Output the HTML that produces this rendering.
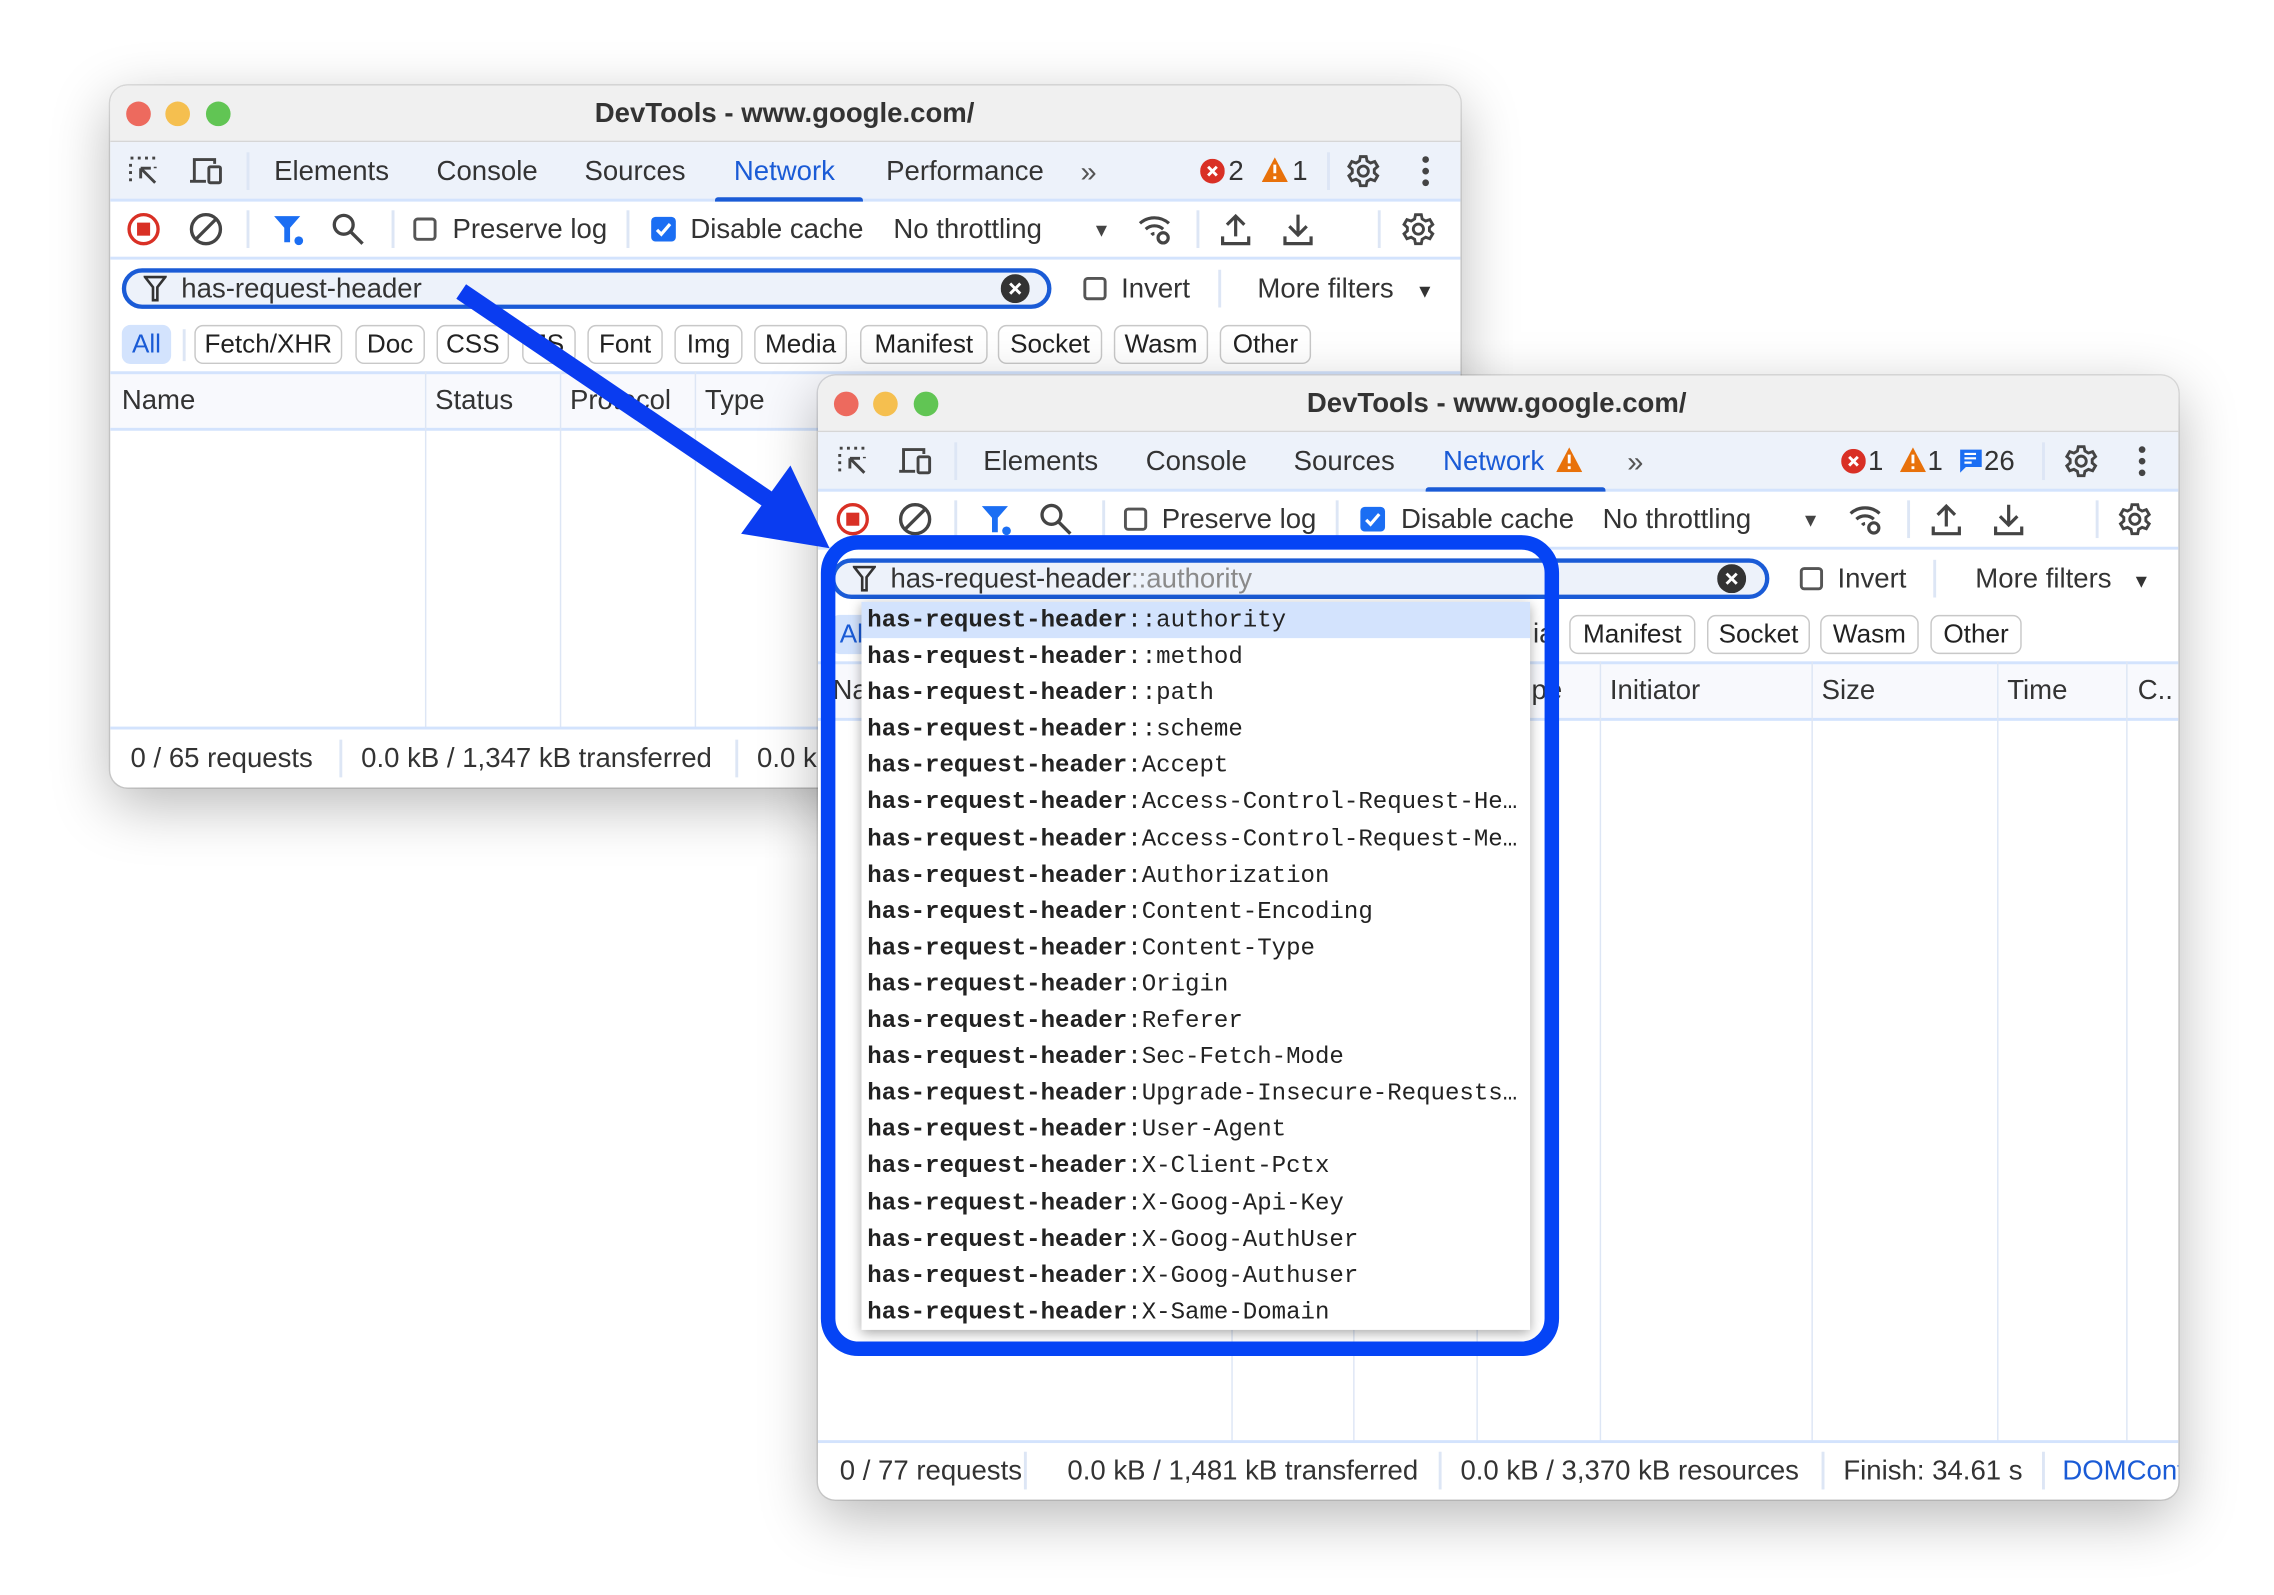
<!DOCTYPE html>
<html><head><meta charset="utf-8"><style>
*{box-sizing:border-box;margin:0;padding:0}
html,body{width:2274px;height:1595px;overflow:hidden;background:#fff}
#s{position:absolute;left:0;top:0;width:1568px;height:1100px;transform:scale(1.4503);transform-origin:0 0;font-family:"Liberation Sans",sans-serif;color:#333}
.w{position:absolute;background:#fff;border-radius:12px;overflow:hidden;box-shadow:0 12px 40px rgba(0,0,0,.28),0 0 0 1px rgba(0,0,0,.12)}
.a{position:absolute}
.c{position:absolute;transform:translateY(-50%);white-space:nowrap;font-size:19px;line-height:22px;margin-top:1px}
.tb{position:absolute;left:0;right:0;top:0;height:39px;background:#f0f0f0;border-bottom:1px solid #d6d6d6}
.tt{position:absolute;top:20px;transform:translate(-50%,-50%);font-size:19px;font-weight:bold;color:#333;white-space:nowrap}
.l{position:absolute;top:11px;width:17px;height:17px;border-radius:50%}
.tabs{position:absolute;left:0;right:0;top:39px;height:41px;background:#edf2fa;border-bottom:2px solid #d3e3fd}
.sep{position:absolute;width:2px;height:26px;background:#dde6f5;transform:translateY(-50%)}
.row{position:absolute;left:0;right:0;border-bottom:2px solid #d3e3fd}
.cb{position:absolute;width:16px;height:16px;border:2px solid #555;border-radius:3px;transform:translateY(-50%)}
.cbk{position:absolute;width:17px;height:17px;background:#1b6ef3;border-radius:3px;transform:translateY(-50%)}
.inp{position:absolute;height:28px;border:3px solid #1a5bd6;border-radius:14px;background:#edf2fa}
.chip{position:absolute;height:27px;border:1.5px solid #c8c8c8;border-radius:6px;font-size:18px;line-height:25px;text-align:center;color:#222}
.vl{position:absolute;width:1px;background:#dde6f5}
.ic{position:absolute;transform:translate(-50%,-50%)}
.dd{position:absolute;left:594px;top:415px;width:461px;height:502px;background:#fff;box-shadow:0 2px 8px rgba(0,0,0,.35)}
.dd div{height:25.1px;line-height:26px;padding-left:4px;font-family:"Liberation Mono",monospace;font-size:16.6px;color:#222;white-space:nowrap;overflow:hidden}
.dd b{font-weight:bold}
</style></head><body><div id="s">

<!-- WINDOW 1 -->
<div class="w" style="left:76px;top:59px;width:931px;height:484px">
 <div class="tb"></div>
 <div class="l" style="left:11px;background:#ed6a5e"></div><div class="l" style="left:38px;background:#f5bf4f"></div><div class="l" style="left:66px;background:#61c554"></div>
 <div class="tt" style="left:465px">DevTools - www.google.com/</div>
 <div class="tabs"></div>
 <svg class="ic" style="left:23px;top:59px" width="24" height="24" viewBox="0 0 24 24" fill="none" stroke="#444" stroke-width="2"><path d="M3 3h2M8 3h2M13 3h2M18 3h2v2M3 7v2M3 12v2M3 17v2h2M20 9v1" stroke-dasharray="2 2"/><path d="M10 10l10 10M10 10v7M10 10h7"/></svg>
 <svg class="ic" style="left:66px;top:59px" width="26" height="24" viewBox="0 0 26 24" fill="none" stroke="#444" stroke-width="2"><path d="M5 19V4h14v3M2 19h11"/><rect x="15" y="9" width="8" height="11" rx="1"/></svg>
 <div class="sep" style="left:94px;top:59px"></div>
 <div class="c" style="left:113px;top:59px">Elements</div>
 <div class="c" style="left:225px;top:59px">Console</div>
 <div class="c" style="left:327px;top:59px">Sources</div>
 <div class="c" style="left:430px;top:59px;color:#1a5bd6">Network</div>
 <div class="a" style="left:417px;top:77px;width:102px;height:3px;background:#1a5bd6;border-radius:2px 2px 0 0"></div>
 <div class="c" style="left:535px;top:59px">Performance</div>
 <div class="c" style="left:669px;top:59px;font-size:20px;color:#555">»</div>
 <svg class="ic" style="left:760px;top:59px" width="17" height="17" viewBox="0 0 17 17"><circle cx="8.5" cy="8.5" r="8.5" fill="#d93025"/><path d="M5.5 5.5l6 6M11.5 5.5l-6 6" stroke="#fff" stroke-width="2"/></svg>
 <div class="c" style="left:771px;top:59px">2</div>
 <svg class="ic" style="left:803px;top:58px" width="18" height="17" viewBox="0 0 18 17"><path d="M9 0L18 17H0z" fill="#e8710a"/><path d="M9 5v6M9 13v2" stroke="#fff" stroke-width="2"/></svg>
 <div class="c" style="left:815px;top:59px">1</div>
 <div class="sep" style="left:839px;top:59px"></div>
 <svg class="ic" style="left:864px;top:59px" width="24" height="24" viewBox="0 0 24 24" fill="none" stroke="#444" stroke-width="2"><circle cx="12" cy="12" r="3.5"/><path d="M10 2h4l.6 3 2.4 1.4 2.9-1 2 3.4-2.3 2v2.4l2.3 2-2 3.4-2.9-1L14.6 19 14 22h-4l-.6-3L7 17.6l-2.9 1-2-3.4 2.3-2v-2.4l-2.3-2 2-3.4 2.9 1L9.4 5z"/></svg>
 <svg class="ic" style="left:907px;top:59px" width="6" height="22" viewBox="0 0 6 22" fill="#444"><circle cx="3" cy="3" r="2.3"/><circle cx="3" cy="11" r="2.3"/><circle cx="3" cy="19" r="2.3"/></svg>
 <div class="row" style="top:80px;height:40px"></div>
 <svg class="ic" style="left:23px;top:99px" width="24" height="24" viewBox="0 0 24 24"><circle cx="12" cy="12" r="10" fill="none" stroke="#d93025" stroke-width="2.3"/><rect x="7.5" y="7.5" width="9" height="9" fill="#d93025"/></svg>
 <svg class="ic" style="left:66px;top:99px" width="24" height="24" viewBox="0 0 24 24" fill="none" stroke="#444" stroke-width="2.3"><circle cx="12" cy="12" r="10"/><path d="M5 19L19 5"/></svg>
 <div class="sep" style="left:94px;top:99px"></div>
 <svg class="ic" style="left:123px;top:99px" width="24" height="24" viewBox="0 0 24 24"><path d="M2 3h18l-7 8v10h-4V11z" fill="#1b6ef3"/><circle cx="19" cy="20" r="3" fill="#1b6ef3"/></svg>
 <svg class="ic" style="left:164px;top:99px" width="24" height="24" viewBox="0 0 24 24" fill="none" stroke="#444" stroke-width="2.3"><circle cx="9" cy="9" r="6.5"/><path d="M14 14l8 8"/></svg>
 <div class="sep" style="left:194px;top:99px"></div>
 <div class="cb" style="left:209px;top:99px"></div>
 <div class="c" style="left:236px;top:99px">Preserve log</div>
 <div class="sep" style="left:356px;top:99px"></div>
 <div class="cbk" style="left:373px;top:99px"><svg width="17" height="17" viewBox="0 0 17 17"><path d="M4 9l3 3 6-7" fill="none" stroke="#fff" stroke-width="2.2"/></svg></div>
 <div class="c" style="left:400px;top:99px">Disable cache</div>
 <div class="c" style="left:540px;top:99px">No throttling</div>
 <div class="c" style="left:677px;top:99px;font-size:13px;color:#444">▼</div>
 <svg class="ic" style="left:721px;top:99px" width="26" height="24" viewBox="0 0 26 24" fill="none" stroke="#444" stroke-width="2.2"><path d="M2 8a15 15 0 0 1 20 0M6 12a9 9 0 0 1 12 0M10 16a3 3 0 0 1 2-1"/><circle cx="18" cy="18" r="3.5"/></svg>
 <div class="sep" style="left:749px;top:99px"></div>
 <svg class="ic" style="left:776px;top:99px" width="22" height="24" viewBox="0 0 22 24" fill="none" stroke="#444" stroke-width="2.2"><path d="M11 17V3M5 9l6-6 6 6M2 17v5h18v-5"/></svg>
 <svg class="ic" style="left:819px;top:99px" width="22" height="24" viewBox="0 0 22 24" fill="none" stroke="#444" stroke-width="2.2"><path d="M11 2v14M5 10l6 6 6-6M2 17v5h18v-5"/></svg>
 <div class="sep" style="left:874px;top:99px"></div>
 <svg class="ic" style="left:902px;top:99px" width="24" height="24" viewBox="0 0 24 24" fill="none" stroke="#444" stroke-width="2"><circle cx="12" cy="12" r="3.5"/><path d="M10 2h4l.6 3 2.4 1.4 2.9-1 2 3.4-2.3 2v2.4l2.3 2-2 3.4-2.9-1L14.6 19 14 22h-4l-.6-3L7 17.6l-2.9 1-2-3.4 2.3-2v-2.4l-2.3-2 2-3.4 2.9 1L9.4 5z"/></svg>
 <div class="inp" style="left:8px;top:126px;width:641px"></div>
 <svg class="ic" style="left:31px;top:140px" width="16" height="18" viewBox="0 0 16 18" fill="none" stroke="#333" stroke-width="1.8"><path d="M1 1h14l-5.5 7v9h-3V8z"/></svg>
 <div class="c" style="left:49px;top:140px">has-request-header</div>
 <svg class="ic" style="left:624px;top:140px" width="20" height="20" viewBox="0 0 20 20"><circle cx="10" cy="10" r="10" fill="#333"/><path d="M6.5 6.5l7 7M13.5 6.5l-7 7" stroke="#fff" stroke-width="2"/></svg>
 <div class="cb" style="left:671px;top:140px"></div>
 <div class="c" style="left:697px;top:140px">Invert</div>
 <div class="sep" style="left:764px;top:140px"></div>
 <div class="c" style="left:791px;top:140px">More filters</div>
 <div class="c" style="left:900px;top:141px;font-size:13px">▼</div>
 <div class="chip" style="left:8px;top:165px;width:34px;background:#d3e3fd;border-color:#d3e3fd;color:#1a5bd6">All</div>
 <div class="a" style="left:50px;top:168px;width:2px;height:22px;background:#dde6f5"></div>
 <div class="chip" style="left:58px;top:165px;width:102px">Fetch/XHR</div>
 <div class="chip" style="left:169px;top:165px;width:48px">Doc</div>
 <div class="chip" style="left:225px;top:165px;width:50px">CSS</div>
 <div class="chip" style="left:284px;top:165px;width:37px">JS</div>
 <div class="chip" style="left:329px;top:165px;width:52px">Font</div>
 <div class="chip" style="left:389px;top:165px;width:47px">Img</div>
 <div class="chip" style="left:444px;top:165px;width:64px">Media</div>
 <div class="chip" style="left:517px;top:165px;width:88px">Manifest</div>
 <div class="chip" style="left:612px;top:165px;width:72px">Socket</div>
 <div class="chip" style="left:692px;top:165px;width:65px">Wasm</div>
 <div class="chip" style="left:765px;top:165px;width:63px">Other</div>
 <div class="row" style="top:197px;height:41px;background:#f8f9fd;border-top:2px solid #d3e3fd"></div>
 <div class="vl" style="left:217px;top:197px;height:247px"></div>
 <div class="vl" style="left:310px;top:197px;height:247px"></div>
 <div class="vl" style="left:403px;top:197px;height:247px"></div>
 <div class="c" style="left:8px;top:217px">Name</div>
 <div class="c" style="left:224px;top:217px">Status</div>
 <div class="c" style="left:317px;top:217px">Protocol</div>
 <div class="c" style="left:410px;top:217px">Type</div>
 <div class="a" style="left:0;right:0;top:442px;height:2px;background:#d3e3fd"></div>
 <div class="c" style="left:14px;top:464px">0 / 65 requests</div>
 <div class="sep" style="left:158px;top:464px"></div>
 <div class="c" style="left:173px;top:464px">0.0 kB / 1,347 kB transferred</div>
 <div class="sep" style="left:431px;top:464px"></div>
 <div class="c" style="left:446px;top:464px">0.0 kB / 3,370 kB resources</div>
</div>

<!-- WINDOW 2 -->
<div class="w" style="left:564px;top:259px;width:938px;height:775px">
 <div class="tb"></div>
 <div class="l" style="left:11px;background:#ed6a5e"></div><div class="l" style="left:38px;background:#f5bf4f"></div><div class="l" style="left:66px;background:#61c554"></div>
 <div class="tt" style="left:468px">DevTools - www.google.com/</div>
 <div class="tabs"></div>
 <svg class="ic" style="left:24px;top:59px" width="24" height="24" viewBox="0 0 24 24" fill="none" stroke="#444" stroke-width="2"><path d="M3 3h2M8 3h2M13 3h2M18 3h2v2M3 7v2M3 12v2M3 17v2h2M20 9v1" stroke-dasharray="2 2"/><path d="M10 10l10 10M10 10v7M10 10h7"/></svg>
 <svg class="ic" style="left:67px;top:59px" width="26" height="24" viewBox="0 0 26 24" fill="none" stroke="#444" stroke-width="2"><path d="M5 19V4h14v3M2 19h11"/><rect x="15" y="9" width="8" height="11" rx="1"/></svg>
 <div class="sep" style="left:94px;top:59px"></div>
 <div class="c" style="left:114px;top:59px">Elements</div>
 <div class="c" style="left:226px;top:59px">Console</div>
 <div class="c" style="left:328px;top:59px">Sources</div>
 <div class="c" style="left:431px;top:59px;color:#1a5bd6">Network</div>
 <svg class="ic" style="left:518px;top:58px" width="18" height="17" viewBox="0 0 18 17"><path d="M9 0L18 17H0z" fill="#e8710a"/><path d="M9 5v6M9 13v2" stroke="#fff" stroke-width="2"/></svg>
 <div class="a" style="left:419px;top:77px;width:124px;height:3px;background:#1a5bd6;border-radius:2px 2px 0 0"></div>
 <div class="c" style="left:558px;top:59px;font-size:20px;color:#555">»</div>
 <svg class="ic" style="left:714px;top:59px" width="17" height="17" viewBox="0 0 17 17"><circle cx="8.5" cy="8.5" r="8.5" fill="#d93025"/><path d="M5.5 5.5l6 6M11.5 5.5l-6 6" stroke="#fff" stroke-width="2"/></svg>
 <div class="c" style="left:724px;top:59px">1</div>
 <svg class="ic" style="left:755px;top:58px" width="18" height="17" viewBox="0 0 18 17"><path d="M9 0L18 17H0z" fill="#e8710a"/><path d="M9 5v6M9 13v2" stroke="#fff" stroke-width="2"/></svg>
 <div class="c" style="left:765px;top:59px">1</div>
 <svg class="ic" style="left:795px;top:59px" width="15" height="18" viewBox="0 0 15 18"><path d="M0 1h15v12H4l-4 4z" fill="#1b6ef3"/><path d="M3 4h8M3 7h8M3 10h5" stroke="#fff" stroke-width="1.5"/></svg>
 <div class="c" style="left:804px;top:59px">26</div>
 <div class="sep" style="left:844px;top:59px"></div>
 <svg class="ic" style="left:871px;top:59px" width="24" height="24" viewBox="0 0 24 24" fill="none" stroke="#444" stroke-width="2"><circle cx="12" cy="12" r="3.5"/><path d="M10 2h4l.6 3 2.4 1.4 2.9-1 2 3.4-2.3 2v2.4l2.3 2-2 3.4-2.9-1L14.6 19 14 22h-4l-.6-3L7 17.6l-2.9 1-2-3.4 2.3-2v-2.4l-2.3-2 2-3.4 2.9 1L9.4 5z"/></svg>
 <svg class="ic" style="left:913px;top:59px" width="6" height="22" viewBox="0 0 6 22" fill="#444"><circle cx="3" cy="3" r="2.3"/><circle cx="3" cy="11" r="2.3"/><circle cx="3" cy="19" r="2.3"/></svg>
 <div class="row" style="top:80px;height:40px"></div>
 <svg class="ic" style="left:24px;top:99px" width="24" height="24" viewBox="0 0 24 24"><circle cx="12" cy="12" r="10" fill="none" stroke="#d93025" stroke-width="2.3"/><rect x="7.5" y="7.5" width="9" height="9" fill="#d93025"/></svg>
 <svg class="ic" style="left:67px;top:99px" width="24" height="24" viewBox="0 0 24 24" fill="none" stroke="#444" stroke-width="2.3"><circle cx="12" cy="12" r="10"/><path d="M5 19L19 5"/></svg>
 <div class="sep" style="left:94px;top:99px"></div>
 <svg class="ic" style="left:123px;top:99px" width="24" height="24" viewBox="0 0 24 24"><path d="M2 3h18l-7 8v10h-4V11z" fill="#1b6ef3"/><circle cx="19" cy="20" r="3" fill="#1b6ef3"/></svg>
 <svg class="ic" style="left:164px;top:99px" width="24" height="24" viewBox="0 0 24 24" fill="none" stroke="#444" stroke-width="2.3"><circle cx="9" cy="9" r="6.5"/><path d="M14 14l8 8"/></svg>
 <div class="sep" style="left:196px;top:99px"></div>
 <div class="cb" style="left:211px;top:99px"></div>
 <div class="c" style="left:237px;top:99px">Preserve log</div>
 <div class="sep" style="left:357px;top:99px"></div>
 <div class="cbk" style="left:374px;top:99px"><svg width="17" height="17" viewBox="0 0 17 17"><path d="M4 9l3 3 6-7" fill="none" stroke="#fff" stroke-width="2.2"/></svg></div>
 <div class="c" style="left:402px;top:99px">Disable cache</div>
 <div class="c" style="left:541px;top:99px">No throttling</div>
 <div class="c" style="left:678px;top:99px;font-size:13px;color:#444">▼</div>
 <svg class="ic" style="left:723px;top:99px" width="26" height="24" viewBox="0 0 26 24" fill="none" stroke="#444" stroke-width="2.2"><path d="M2 8a15 15 0 0 1 20 0M6 12a9 9 0 0 1 12 0M10 16a3 3 0 0 1 2-1"/><circle cx="18" cy="18" r="3.5"/></svg>
 <div class="sep" style="left:751px;top:99px"></div>
 <svg class="ic" style="left:778px;top:99px" width="22" height="24" viewBox="0 0 22 24" fill="none" stroke="#444" stroke-width="2.2"><path d="M11 17V3M5 9l6-6 6 6M2 17v5h18v-5"/></svg>
 <svg class="ic" style="left:821px;top:99px" width="22" height="24" viewBox="0 0 22 24" fill="none" stroke="#444" stroke-width="2.2"><path d="M11 2v14M5 10l6 6 6-6M2 17v5h18v-5"/></svg>
 <div class="sep" style="left:881px;top:99px"></div>
 <svg class="ic" style="left:908px;top:99px" width="24" height="24" viewBox="0 0 24 24" fill="none" stroke="#444" stroke-width="2"><circle cx="12" cy="12" r="3.5"/><path d="M10 2h4l.6 3 2.4 1.4 2.9-1 2 3.4-2.3 2v2.4l2.3 2-2 3.4-2.9-1L14.6 19 14 22h-4l-.6-3L7 17.6l-2.9 1-2-3.4 2.3-2v-2.4l-2.3-2 2-3.4 2.9 1L9.4 5z"/></svg>
 <div class="inp" style="left:9px;top:126px;width:647px"></div>
 <svg class="ic" style="left:32px;top:140px" width="16" height="18" viewBox="0 0 16 18" fill="none" stroke="#333" stroke-width="1.8"><path d="M1 1h14l-5.5 7v9h-3V8z"/></svg>
 <div class="c" style="left:50px;top:140px">has-request-header<span style="color:#8a8a8a">::authority</span></div>
 <svg class="ic" style="left:630px;top:140px" width="20" height="20" viewBox="0 0 20 20"><circle cx="10" cy="10" r="10" fill="#333"/><path d="M6.5 6.5l7 7M13.5 6.5l-7 7" stroke="#fff" stroke-width="2"/></svg>
 <div class="cb" style="left:677px;top:140px"></div>
 <div class="c" style="left:703px;top:140px">Invert</div>
 <div class="sep" style="left:769px;top:140px"></div>
 <div class="c" style="left:798px;top:140px">More filters</div>
 <div class="c" style="left:906px;top:141px;font-size:13px">▼</div>
 <div class="chip" style="left:9px;top:165px;width:34px;background:#d3e3fd;border-color:#d3e3fd;color:#1a5bd6;text-align:left;padding-left:5px">All</div>
 <div class="c" style="left:493px;top:178px">ia</div>
 <div class="chip" style="left:518px;top:165px;width:87px">Manifest</div>
 <div class="chip" style="left:613px;top:165px;width:71px">Socket</div>
 <div class="chip" style="left:691px;top:165px;width:68px">Wasm</div>
 <div class="chip" style="left:767px;top:165px;width:63px">Other</div>
 <div class="row" style="top:197px;height:41px;background:#f8f9fd;border-top:2px solid #d3e3fd"></div>
 <div class="vl" style="left:285px;top:197px;height:538px"></div>
 <div class="vl" style="left:369px;top:197px;height:538px"></div>
 <div class="vl" style="left:454px;top:197px;height:538px"></div>
 <div class="vl" style="left:539px;top:197px;height:538px"></div>
 <div class="vl" style="left:685px;top:197px;height:538px"></div>
 <div class="vl" style="left:813px;top:197px;height:538px"></div>
 <div class="vl" style="left:902px;top:197px;height:538px"></div>
 <div class="c" style="left:10px;top:217px">Name</div>
 <div class="c" style="left:492px;top:217px">pe</div>
 <div class="c" style="left:546px;top:217px">Initiator</div>
 <div class="c" style="left:692px;top:217px">Size</div>
 <div class="c" style="left:820px;top:217px">Time</div>
 <div class="c" style="left:910px;top:217px">C..</div>
 <div class="a" style="left:0;right:0;top:734px;height:2px;background:#d3e3fd"></div>
 <div class="c" style="left:15px;top:755px">0 / 77 requests</div>
 <div class="sep" style="left:142px;top:755px"></div>
 <div class="c" style="left:172px;top:755px">0.0 kB / 1,481 kB transferred</div>
 <div class="sep" style="left:428px;top:755px"></div>
 <div class="c" style="left:443px;top:755px">0.0 kB / 3,370 kB resources</div>
 <div class="sep" style="left:692px;top:755px"></div>
 <div class="c" style="left:707px;top:755px">Finish: 34.61 s</div>
 <div class="sep" style="left:844px;top:755px"></div>
 <div class="c" style="left:858px;top:755px;color:#1a5bd6">DOMContentLoaded</div>
</div>

<div class="dd">
<div style="background:#d3e3fd"><b>has-request-header</b>::authority</div>
<div><b>has-request-header</b>::method</div>
<div><b>has-request-header</b>::path</div>
<div><b>has-request-header</b>::scheme</div>
<div><b>has-request-header</b>:Accept</div>
<div><b>has-request-header</b>:Access-Control-Request-He…</div>
<div><b>has-request-header</b>:Access-Control-Request-Me…</div>
<div><b>has-request-header</b>:Authorization</div>
<div><b>has-request-header</b>:Content-Encoding</div>
<div><b>has-request-header</b>:Content-Type</div>
<div><b>has-request-header</b>:Origin</div>
<div><b>has-request-header</b>:Referer</div>
<div><b>has-request-header</b>:Sec-Fetch-Mode</div>
<div><b>has-request-header</b>:Upgrade-Insecure-Requests…</div>
<div><b>has-request-header</b>:User-Agent</div>
<div><b>has-request-header</b>:X-Client-Pctx</div>
<div><b>has-request-header</b>:X-Goog-Api-Key</div>
<div><b>has-request-header</b>:X-Goog-AuthUser</div>
<div><b>has-request-header</b>:X-Goog-Authuser</div>
<div><b>has-request-header</b>:X-Same-Domain</div>
</div>

<div class="a" style="left:566px;top:369px;width:509px;height:566px;border:10px solid #0544f5;border-radius:26px"></div>

<svg class="a" style="left:0;top:0" width="1568" height="1100" viewBox="0 0 1568 1100">
<path d="M318 201L532 346" stroke="#0a3cf0" stroke-width="12" fill="none"/>
<path d="M572 378L511 368L545 321z" fill="#0a3cf0"/>
</svg>
</div></body></html>
